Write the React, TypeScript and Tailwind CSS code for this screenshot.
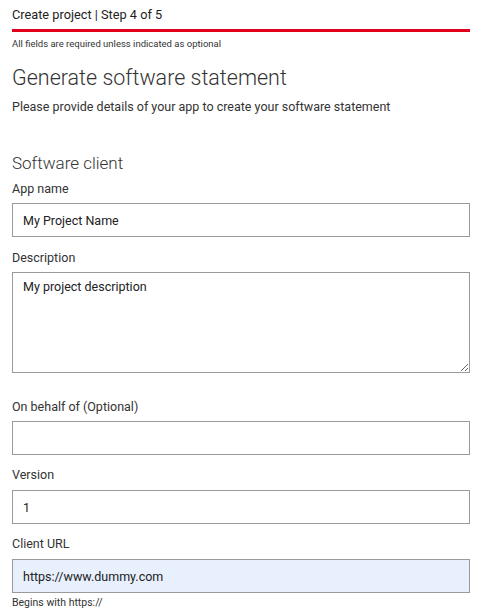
import React from 'react';

const Label: React.FC<{ children: React.ReactNode }> = ({ children }) => (
    <label className="block text-[12.5px] leading-[16px] text-[#333]">{children}</label>
);

const inputBase =
    'block w-full h-[34px] border border-[#9a9a9a] px-[10px] text-[12.5px] text-[#222] outline-none';

export default function App() {
    return (
        <div className="w-[484px] min-h-[615px] bg-white px-[12px] pt-[6px] font-['Roboto','Liberation_Sans',sans-serif] text-[#333]">
            {/* Step header */}
            <div className="w-[458px]">
                <div className="text-[12.75px] leading-[16px] text-[#222] pt-[1px]">Create project | Step 4 of 5</div>
                <div className="mt-[6px] h-[3px] bg-[#e0001b]" />
                <div className="mt-[6px] text-[9.5px] leading-[12px] text-[#333]">
                    All fields are required unless indicated as optional
                </div>
            </div>

            <h1 className="mt-[14px] text-[21.5px] leading-[28px] font-light text-[#333]">Generate software statement</h1>
            <p className="mt-[7px] text-[12.5px] leading-[16px] text-[#333]">
                Please provide details of your app to create your software statement
            </p>

            <h2 className="mt-[37px] text-[17px] leading-[22px] font-light text-[#333]">Software client</h2>

            <div className="w-[458px]">
                <div className="mt-[7px]">
                    <Label>App name</Label>
                    <input className={`${inputBase} mt-[6px]`} defaultValue="My Project Name" />
                </div>

                <div className="mt-[13px]">
                    <Label>Description</Label>
                    <textarea
                        className="block w-full h-[101px] mt-[6px] border border-[#9a9a9a] px-[10px] pt-[6px] text-[12.5px] leading-[16px] text-[#222] outline-none"
                        defaultValue="My project description"
                    />
                </div>

                <div className="mt-[26px]">
                    <Label>On behalf of (Optional)</Label>
                    <input className={`${inputBase} mt-[6px]`} defaultValue="" />
                </div>

                <div className="mt-[12px]">
                    <Label>Version</Label>
                    <input className={`${inputBase} mt-[7px]`} defaultValue="1" />
                </div>

                <div className="mt-[12px]">
                    <Label>Client URL</Label>
                    <input className={`${inputBase} mt-[7px] bg-[#e8f0fe]`} defaultValue="https://www.dummy.com" />
                    <div className="mt-[3px] text-[10.5px] leading-[13px] text-[#333]">Begins with https://</div>
                </div>
            </div>
        </div>
    );
}
